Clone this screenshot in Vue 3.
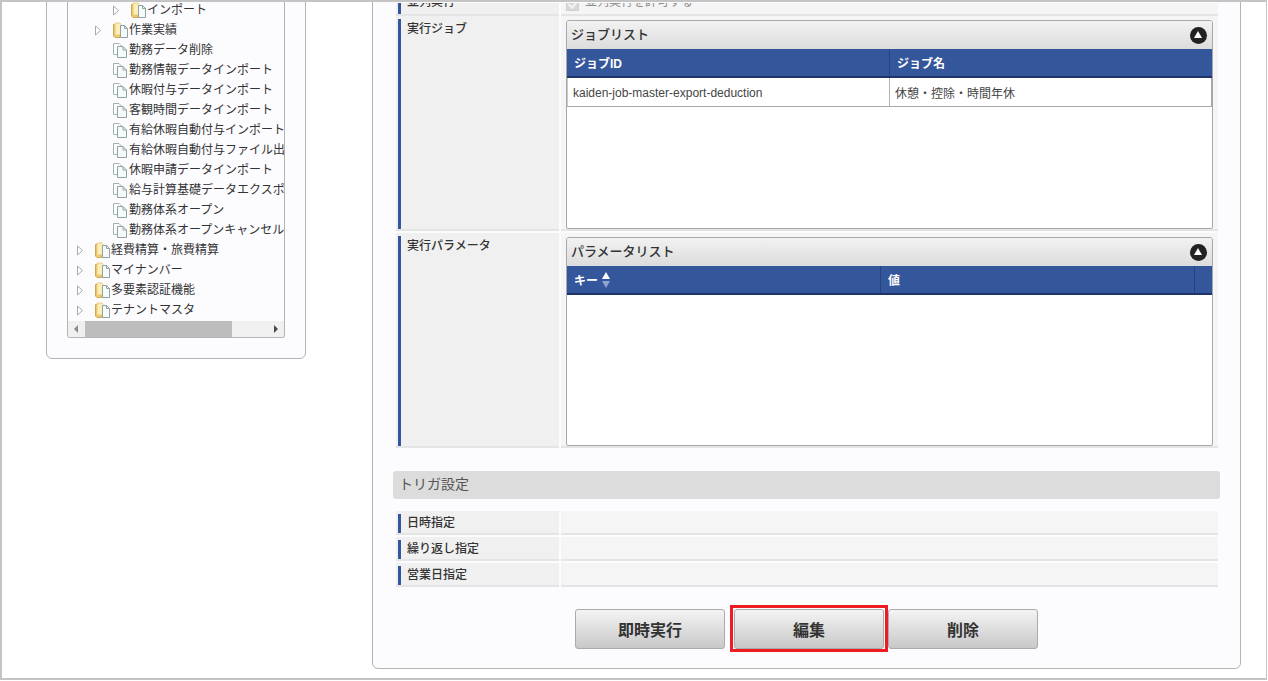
<script setup>
const tree = [
  { t: 'インポート', l: 3, k: 'folder' },
  { t: '作業実績', l: 2, k: 'folder' },
  { t: '勤務データ削除', l: 2, k: 'doc' },
  { t: '勤務情報データインポート', l: 2, k: 'doc' },
  { t: '休暇付与データインポート', l: 2, k: 'doc' },
  { t: '客観時間データインポート', l: 2, k: 'doc' },
  { t: '有給休暇自動付与インポート', l: 2, k: 'doc' },
  { t: '有給休暇自動付与ファイル出力', l: 2, k: 'doc' },
  { t: '休暇申請データインポート', l: 2, k: 'doc' },
  { t: '給与計算基礎データエクスポート', l: 2, k: 'doc' },
  { t: '勤務体系オープン', l: 2, k: 'doc' },
  { t: '勤務体系オープンキャンセル', l: 2, k: 'doc' },
  { t: '経費精算・旅費精算', l: 1, k: 'folder' },
  { t: 'マイナンバー', l: 1, k: 'folder' },
  { t: '多要素認証機能', l: 1, k: 'folder' },
  { t: 'テナントマスタ', l: 1, k: 'folder' },
]
const triggers = ['日時指定', '繰り返し指定', '営業日指定']
</script>

<template>
  <div class="page">
    <div class="frame">
      <aside class="side">
        <div class="tree">
          <div class="tree-rows">
            <div v-for="n in tree" :key="n.t" class="node" :style="{ paddingLeft: (n.l - 1) * 18 + 8 + 'px' }">
              <svg class="arrow" width="8" height="11" viewBox="0 0 8 11">
                <path v-if="n.k === 'folder'" d="M1.5 1 L6.5 5.500 L1.5 10 Z" fill="#fff" stroke="#a8a8a8" />
              </svg>
              <svg v-if="n.k === 'folder'" class="ico" width="16" height="16" viewBox="0 0 16 16">
                <path d="M1.500 2.500 H8 V15.500 H3 L1.500 14 Z" fill="#f0cb72" stroke="#cfa855" />
                <path d="M3 1 H8 L9 2.500 V13 H3 Z" fill="#fdeeb8" stroke="#e0bd6c" stroke-width=".7" />
                <path d="M8.500 3.500 H12.500 L15.500 6.500 V15.500 H8.500 Z" fill="#f7fafa" stroke="#8fa3a3" />
                <path d="M12.500 3.500 V6.500 H15.500" fill="none" stroke="#8fa3a3" />
              </svg>
              <svg v-else class="ico" width="16" height="16" viewBox="0 0 16 16">
                <path d="M1.500 1.500 H7 L10 4.500 V12.500 H1.500 Z" fill="#fbfdfd" stroke="#a3b3b3" />
                <path d="M5.500 4.500 H11 L14.500 8 V15.500 H5.500 Z" fill="#f7fafa" stroke="#8fa3a3" />
                <path d="M11 4.500 V8 H14.500" fill="none" stroke="#8fa3a3" />
              </svg>
              <span class="node-t">{{ n.t }}</span>
            </div>
          </div>
          <div class="hscroll">
            <svg width="17" height="16" viewBox="0 0 17 16"><path d="M10 4 L6 8 L10 12 Z" fill="#8a8a8a" /></svg>
            <div class="track"><div class="thumb"></div></div>
            <svg width="17" height="16" viewBox="0 0 17 16"><path d="M7 4 L11 8 L7 12 Z" fill="#4a4a4a" /></svg>
          </div>
        </div>
      </aside>

      <main class="panel">
        <div class="row first">
          <div class="lbl"><span class="clip-l">並列実行</span></div>
          <div class="val">
            <span class="chk"></span><span class="chk-t">並列実行を許可する</span>
          </div>
        </div>

        <div class="row tall">
          <div class="lbl">実行ジョブ</div>
          <div class="val pad">
            <section class="grid">
              <header class="cap">
                <span class="cap-t">ジョブリスト</span>
                <span class="toggle"></span>
              </header>
              <div class="thead jobs">
                <div class="th">ジョブID</div>
                <div class="th">ジョブ名</div>
              </div>
              <div class="tr jobs-r">
                <div class="td latin">kaiden-job-master-export-deduction</div>
                <div class="td">休憩・控除・時間年休</div>
              </div>
            </section>
          </div>
        </div>

        <div class="row tall">
          <div class="lbl">実行パラメータ</div>
          <div class="val pad">
            <section class="grid">
              <header class="cap">
                <span class="cap-t">パラメータリスト</span>
                <span class="toggle"></span>
              </header>
              <div class="thead params">
                <div class="th">キー<span class="sort"><i class="up"></i><i class="down"></i></span></div>
                <div class="th">値</div>
                <div class="th"></div>
              </div>
            </section>
          </div>
        </div>

        <h2 class="section">トリガ設定</h2>

        <div v-for="t in triggers" :key="t" class="row small">
          <div class="lbl">{{ t }}</div>
          <div class="val"></div>
        </div>

        <div class="buttons">
          <button class="btn">即時実行</button>
          <button class="btn mark">編集</button>
          <button class="btn">削除</button>
        </div>
      </main>
    </div>
  </div>
</template>

<style scoped>
.page {
  width: 1268px;
  height: 681px;
  background: #fff;
  overflow: hidden;
}
.frame {
  box-sizing: border-box;
  width: 1267px;
  height: 680px;
  border: 2px solid #c4c4c4;
  border-width: 2px 1px 2px 2px;
  background: #fff;
  overflow: hidden;
  display: flex;
  align-items: flex-start;
  font-family: "Liberation Sans", "Noto Sans CJK JP", sans-serif;
  font-size: 12px;
  color: #333;
}
.side {
  box-sizing: border-box;
  width: 260px;
  height: 377px;
  margin: -20px 0 0 44px;
  padding: 0 20px;
  background: #fcfcff;
  border: 1px solid #b4b4b4;
  border-radius: 6px;
  flex: none;
}
.tree {
  box-sizing: border-box;
  height: 355px;
  display: flex;
  flex-direction: column;
  border: 1px solid #b4b4b4;
  border-top: 0;
  border-radius: 0 0 3px 3px;
  overflow: hidden;
  background: #fcfcff;
}
.tree-rows {
  flex: 1;
  padding-top: 17px;
  overflow: hidden;
}
.node {
  height: 20px;
  display: flex;
  align-items: center;
  white-space: nowrap;
}
.arrow { flex: none; margin-right: 10px; }
.ico { flex: none; margin-right: 1px; }
.node-t { font-size: 12px; line-height: 20px; color: #333; }
.hscroll {
  height: 16px;
  flex: none;
  display: flex;
  background: #f0f0f0;
}
.track { flex: 1; }
.thumb { width: 147px; height: 100%; background: #bdbdbd; }
.panel {
  box-sizing: border-box;
  width: 869px;
  height: 700px;
  margin: -33px 0 0 66px;
  padding: 33px 22px 0 20px;
  background: #fcfcff;
  border: 1px solid #b4b4b4;
  border-radius: 6px;
  flex: none;
}
.row {
  display: flex;
  gap: 2px;
  margin-left: 3px;
}
.lbl {
  box-sizing: border-box;
  width: 163px;
  flex: none;
  background: #f0f0f0;
  border-bottom: 2px solid #e4e4e4;
  padding-left: 11px;
  font-weight: 500;
  color: #333;
  position: relative;
}
.lbl::before {
  content: "";
  position: absolute;
  left: 2px;
  top: 3px;
  bottom: 0;
  width: 3px;
  background: #34569a;
}
.val {
  flex: 1;
  background: #f5f5f5;
  border-bottom: 2px solid #e4e4e4;
}
.first {
  height: 13px;
  overflow: hidden;
}
.first .lbl { overflow: hidden; }
.first .lbl::before { top: 0; }
.clip-l { display: block; margin-top: -10px; line-height: 18px; }
.first .val {
  display: flex;
  align-items: flex-start;
  overflow: hidden;
  box-sizing: border-box;
  padding-left: 5px;
}
.chk {
  width: 11px;
  height: 11px;
  margin-top: -5px;
  background: #d8d8d8;
  border: 1px solid #d0d0d0;
  flex: none;
  position: relative;
}
.chk::after {
  content: "";
  position: absolute;
  left: 3px;
  top: 0;
  width: 4px;
  height: 7px;
  border: solid #f2f2f2;
  border-width: 0 2px 2px 0;
  transform: rotate(40deg);
}
.chk-t { margin: -10px 0 0 6px; line-height: 18px; color: #8a8a8a; }
.tall { height: 215px; margin-bottom: 2px; }
.tall .lbl { padding-top: 5px; line-height: 17px; }
.pad { padding: 4px 5px 0; box-sizing: border-box; }
.grid {
  box-sizing: border-box;
  height: 209px;
  background: #fff;
  border: 1px solid #a8a8a8;
  border-radius: 3px 3px 2px 2px;
  overflow: hidden;
}
.cap {
  box-sizing: border-box;
  height: 28px;
  display: flex;
  align-items: center;
  justify-content: space-between;
  padding: 0 5px 0 4px;
  background: linear-gradient(#f2f2f2, #dcdcdc);
  font-size: 13px;
  font-weight: 500;
  color: #333;
}
.cap-t { margin-top: -3px; }
.toggle {
  width: 17px;
  height: 17px;
  border-radius: 50%;
  background: #222;
  position: relative;
  flex: none;
}
.toggle::after {
  content: "";
  position: absolute;
  left: 4px;
  top: 4px;
  border-left: 4.500px solid transparent;
  border-right: 4.500px solid transparent;
  border-bottom: 7px solid #fff;
}
.thead {
  box-sizing: border-box;
  height: 29px;
  display: grid;
  background: #34569a;
  border-bottom: 2px solid #1f3468;
  color: #fff;
  font-weight: 700;
}
.jobs { grid-template-columns: 323px 1fr; }
.jobs-r { grid-template-columns: 322px 1fr; }
.params { grid-template-columns: 314px 314px 1fr; }
.th {
  display: flex;
  align-items: center;
  padding-left: 7px;
  border-right: 1px solid #27437f;
}
.th:last-child { border-right: 0; }
.sort {
  display: inline-flex;
  flex-direction: column;
  gap: 2px;
  margin-left: 4px;
}
.sort i {
  display: block;
  border-left: 4px solid transparent;
  border-right: 4px solid transparent;
}
.sort .up { border-bottom: 7px solid #fff; }
.sort .down { border-top: 7px solid #8fa3cf; }
.tr {
  box-sizing: border-box;
  height: 29px;
  display: grid;
  border: 1px solid #a8a8a8;
  border-top: 0;
  border-left-color: #c8c8c8;
  background: #fff;
}
.td {
  display: flex;
  align-items: center;
  padding-left: 5px;
  color: #444;
  border-right: 1px solid #b4b4b4;
}
.td.latin { padding-top: 2px; }
.td:last-child { border-right: 0; }
.section {
  box-sizing: border-box;
  height: 28px;
  margin: 23px -2px 12px 0;
  padding-left: 6px;
  line-height: 27px;
  font-size: 14px;
  font-weight: 400;
  color: #555;
  background: #dcdcdc;
  border-radius: 3px;
}
.small { height: 24px; margin-bottom: 2px; }
.small .lbl { line-height: 25px; }
.buttons {
  display: flex;
  margin: 22px 0 0 182px;
}
.btn {
  box-sizing: border-box;
  width: 150px;
  height: 40px;
  background: linear-gradient(#f4f4f4, #c8c8c8);
  border: 1px solid #ababab;
  border-radius: 3px;
  font: 700 16px "Liberation Sans", "Noto Sans CJK JP", sans-serif;
  color: #333;
  padding: 0;
  position: relative;
}
.mark { margin: 0 4px 0 9px; }
.mark::after {
  content: "";
  position: absolute;
  left: -5px;
  top: -5px;
  right: -5px;
  bottom: -4px;
  border: 3px solid #ed1c24;
  pointer-events: none;
}
</style>
